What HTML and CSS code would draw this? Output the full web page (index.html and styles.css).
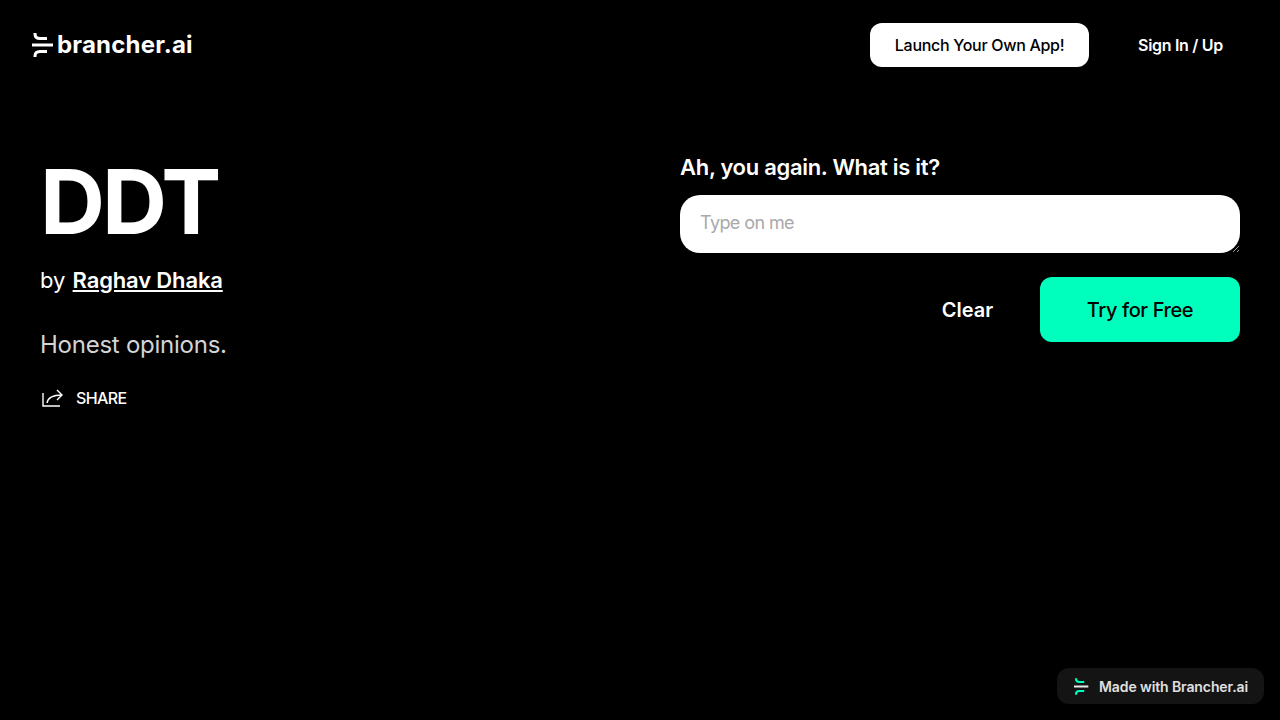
FILE: index.html
```html
<!DOCTYPE html>
<html lang="en">

<head>
    <meta charset="utf-8">
    <title>DDT</title>
    <link rel="stylesheet" href="styles.css">
</head>

<body>
    <header class="header">
        <a class="logo" href="#">
            <svg class="logo-mark" viewBox="0 0 22 24" width="22" height="24">
                <path d="M3 0v1c0 3 2 4.500 5 4.500h7M3 24v-1c0-3 2-4.500 5-4.500h7" fill="none" stroke="#fff" stroke-width="3" />
                <path d="M0 12h21" fill="none" stroke="#fff" stroke-width="3" />
            </svg>
            <span class="logo-text">brancher.ai</span>
        </a>
        <nav class="nav">
            <button class="launch">Launch Your Own App!</button>
            <button class="signin">Sign In / Up</button>
        </nav>
    </header>

    <main class="main">
        <section class="intro">
            <h1 class="title">DDT</h1>
            <p class="byline">by <a href="#">Raghav Dhaka</a></p>
            <p class="desc">Honest opinions.</p>
            <a class="share" href="#">
                <svg viewBox="0 0 24 24" width="24" height="24">
                    <path d="M3 7v13h17M7 17c1-6 6-8 15-8M17 4l5 5-5 5" fill="none" stroke="#fff" stroke-width="1.400" />
                </svg>
                SHARE
            </a>
        </section>

        <form class="prompt">
            <label class="prompt-label" for="input">Ah, you again. What is it?</label>
            <textarea class="prompt-input" id="input" placeholder="Type on me"></textarea>
            <div class="actions">
                <button class="clear" type="button">Clear</button>
                <button class="try" type="button">Try for Free</button>
            </div>
        </form>
    </main>

    <a class="badge" href="#">
        <svg viewBox="0 0 22 24" width="15" height="17">
            <path d="M3 0v1c0 3 2 4.500 5 4.500h7M3 24v-1c0-3 2-4.500 5-4.500h7" fill="none" stroke="#00ffbd" stroke-width="3" />
            <path d="M0 12h21" fill="none" stroke="#e8e8e8" stroke-width="3" />
        </svg>
        Made with Brancher.ai
    </a>
</body>

</html>
```

FILE: styles.css
```css
* {
    box-sizing: border-box;
}

body {
    margin: 0;
    height: 720px;
    overflow: hidden;
    background: #000;
    color: #fff;
    font-family: "Inter", "Noto Sans", sans-serif;
}

a {
    color: inherit;
}

button {
    font-family: inherit;
    border: none;
    cursor: pointer;
}

.header {
    display: flex;
    justify-content: space-between;
    align-items: center;
    height: 90px;
    padding: 0 32px;
}

.logo {
    display: flex;
    align-items: center;
    gap: 3px;
    text-decoration: none;
}

.logo-text {
    margin-top: -2px;
    font-size: 24px;
    font-weight: 700;
    letter-spacing: 0.2px;
}

.nav {
    display: flex;
    align-items: center;
    gap: 48px;
    padding-right: 24px;
}

.launch {
    width: 219px;
    height: 44px;
    border-radius: 12px;
    background: #fff;
    color: #000;
    font-size: 16px;
    font-weight: 500;
    letter-spacing: -0.3px;
}

.signin {
    padding: 0 1px;
    background: none;
    color: #fff;
    font-size: 16px;
    font-weight: 600;
    letter-spacing: -0.3px;
}

.main {
    display: flex;
    justify-content: space-between;
    padding: 0 40px;
}

.intro {
    width: 560px;
    padding-top: 56px;
}

.title {
    margin: 0;
    font-size: 90px;
    line-height: 112px;
    font-weight: 700;
    letter-spacing: -3px;
}

.byline {
    margin: 6px 0 0;
    font-size: 22px;
    line-height: 32px;
}

.byline a {
    margin-left: 1px;
    font-weight: 600;
    letter-spacing: -0.15px;
}

.desc {
    margin: 32px 0 0;
    font-size: 24px;
    line-height: 34px;
    color: #d4d4d4;
    letter-spacing: -0.25px;
}

.share {
    display: flex;
    align-items: center;
    gap: 12px;
    margin-top: 24px;
    font-size: 16px;
    font-weight: 500;
    line-height: 24px;
    letter-spacing: -0.6px;
    text-decoration: none;
}

.prompt {
    display: flex;
    flex-direction: column;
    width: 560px;
    padding-top: 60px;
}

.prompt-label {
    font-size: 22px;
    line-height: 34px;
    font-weight: 600;
    letter-spacing: -0.3px;
}

.prompt-input {
    width: 100%;
    height: 58px;
    margin-top: 11px;
    padding: 16px 20px;
    border: none;
    border-radius: 20px;
    background: #fff;
    font-family: inherit;
    font-size: 18px;
    line-height: 24px;
    letter-spacing: -0.6px;
}

.prompt-input::placeholder {
    color: #a9a9a9;
}

.actions {
    display: flex;
    justify-content: flex-end;
    align-items: center;
    margin-top: 24px;
}

.clear {
    width: 145px;
    height: 65px;
    background: none;
    color: #fff;
    font-size: 20px;
    font-weight: 600;
}

.try {
    width: 200px;
    height: 65px;
    border-radius: 12px;
    background: #00ffbd;
    color: #000;
    font-size: 20px;
    font-weight: 500;
    letter-spacing: -0.4px;
}

.badge {
    position: absolute;
    right: 16px;
    bottom: 16px;
    display: flex;
    align-items: center;
    gap: 10px;
    width: 207px;
    height: 36px;
    padding-left: 17px;
    border-radius: 12px;
    background: #141414;
    color: #e0e0e0;
    font-size: 14px;
    font-weight: 600;
    letter-spacing: -0.1px;
    text-decoration: none;
}
```
